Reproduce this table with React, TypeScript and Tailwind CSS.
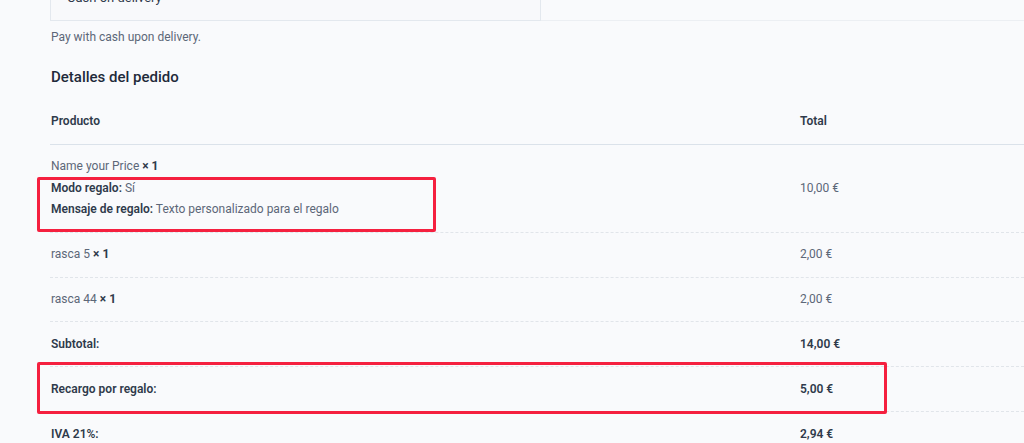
import React from "react"

type Row = {
  lines: React.ReactNode[]
  total: string
  h: string
}

const rows: Row[] = [
  {
    lines: [
      <>
        Name your Price <b className="font-bold text-[#2f3a4b]">× 1</b>
      </>,
      <>
        <b className="font-semibold text-[#2f3a4b]">Modo regalo:</b> Sí
      </>,
      <>
        <b className="font-semibold text-[#2f3a4b]">Mensaje de regalo:</b> Texto personalizado para el regalo
      </>,
    ],
    total: "10,00 €",
    h: "h-[88px]",
  },
  {
    lines: [
      <>
        rasca 5 <b className="font-bold text-[#2f3a4b]">× 1</b>
      </>,
    ],
    total: "2,00 €",
    h: "h-[45px]",
  },
  {
    lines: [
      <>
        rasca 44 <b className="font-bold text-[#2f3a4b]">× 1</b>
      </>,
    ],
    total: "2,00 €",
    h: "h-[44px]",
  },
]

const totals = [
  { label: "Subtotal:", value: "14,00 €" },
  { label: "Recargo por regalo:", value: "5,00 €" },
  { label: "IVA 21%:", value: "2,94 €" },
]

export default function App() {
  return (
    <div className="relative h-[443px] w-[1024px] overflow-hidden bg-[#f9fafc] font-['Roboto',sans-serif] text-[12px] text-[#5c6778]">
      {/* payment method box, scrolled partly out of view */}
      <div className="flex">
        <div className="ml-[50px] mt-[-30px] h-[51px] w-[491px] border border-[#e3e8ee] bg-[#f8f9fb] pl-[16px] pt-[17px] text-[13px] text-[#2f3a4b]">
          Cash on delivery
        </div>
        <div className="h-[21px] flex-1 border-b border-[#eceff3]" />
      </div>

      <p className="ml-[51px] mt-[7px] leading-[18px]">Pay with cash upon delivery.</p>

      <h2 className="ml-[51px] mt-[20px] text-[15px] font-medium leading-[22px] text-[#1f2a3a]">
        Detalles del pedido
      </h2>

      <div className="ml-[50px] mt-[23px]">
        {/* header */}
        <div className="flex border-b border-[#dbe2ea] pb-[12px] font-semibold leading-[21px] text-[#2f3a4b]">
          <div className="w-[750px] pl-[1px]">Producto</div>
          <div>Total</div>
        </div>

        {rows.map((row, i) => (
          <div key={i} className={`flex items-center border-b border-dashed border-[#e1e5ea] leading-[21.5px] ${row.h}`}>
            <div className="w-[750px] pl-[1px]">
              {row.lines.map((l, j) => (
                <div key={j}>{l}</div>
              ))}
            </div>
            <div>{row.total}</div>
          </div>
        ))}

        {totals.map((t) => (
          <div key={t.label} className="flex h-[45px] items-center border-b border-dashed border-[#e1e5ea] font-semibold leading-[21px] text-[#2f3a4b]">
            <div className="w-[750px] pl-[1px]">{t.label}</div>
            <div>{t.value}</div>
          </div>
        ))}
      </div>

      {/* annotation highlights */}
      <div className="pointer-events-none absolute left-[37px] top-[177px] h-[55px] w-[399px] rounded-[2px] border-[3px] border-[#f5203f]" />
      <div className="pointer-events-none absolute left-[37px] top-[362px] h-[52px] w-[850px] rounded-[2px] border-[3px] border-[#f5203f]" />
    </div>
  )
}
